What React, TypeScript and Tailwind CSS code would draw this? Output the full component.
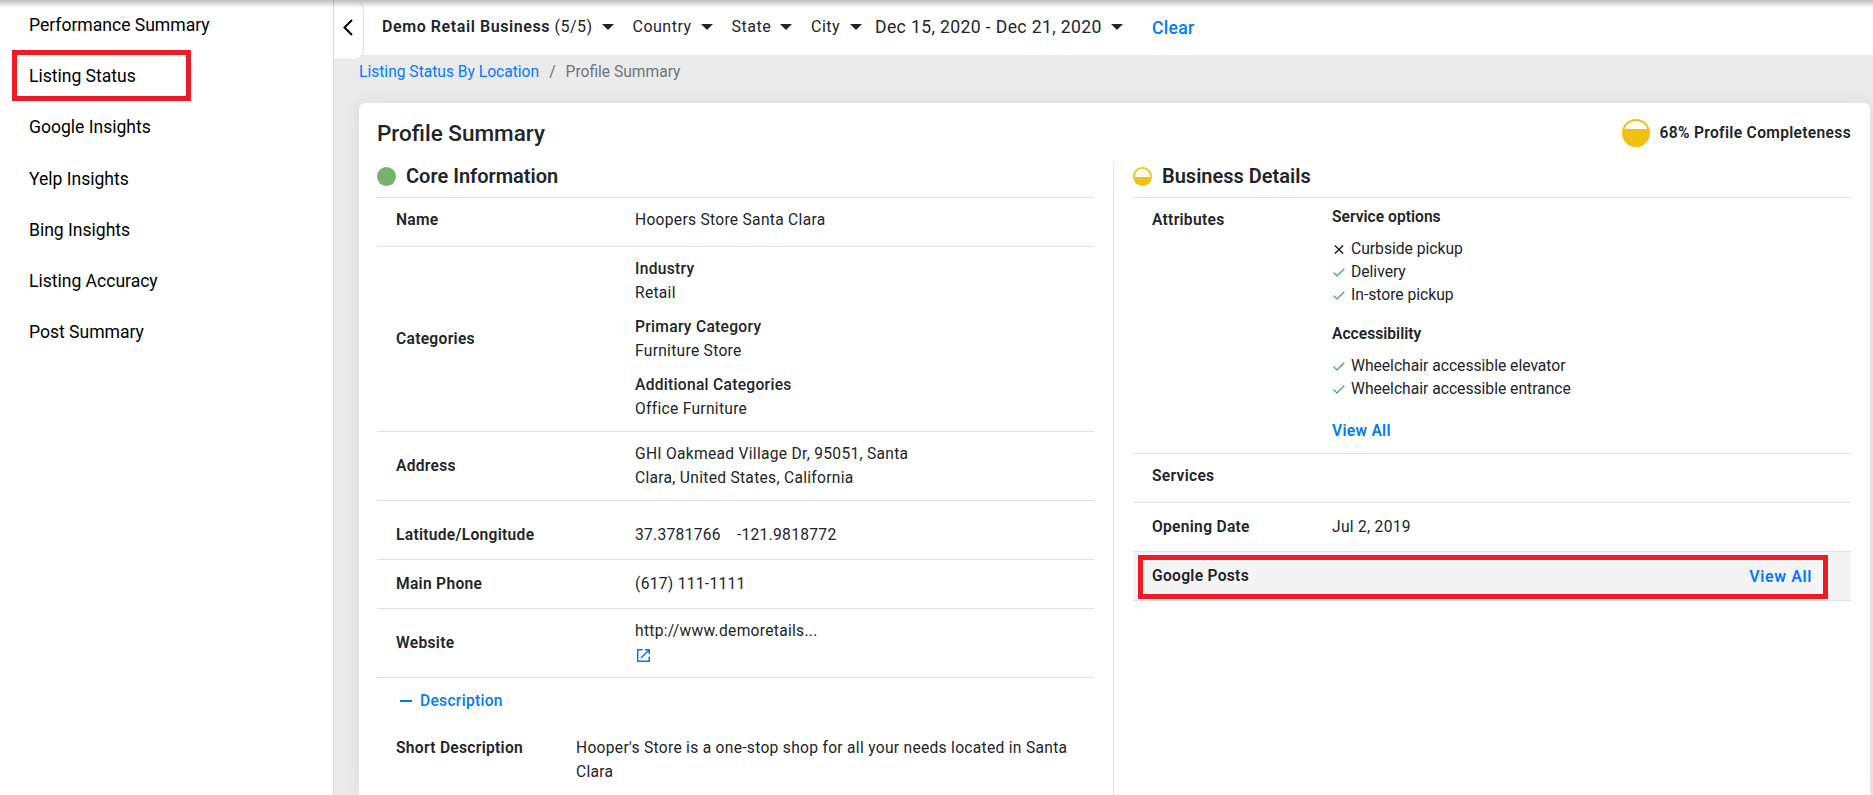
import React from 'react';

const menu = [
  'Performance Summary',
  'Listing Status',
  'Google Insights',
  'Yelp Insights',
  'Bing Insights',
  'Listing Accuracy',
  'Post Summary',
];

const categories = [
  { title: 'Industry', value: 'Retail' },
  { title: 'Primary Category', value: 'Furniture Store' },
  { title: 'Additional Categories', value: 'Office Furniture' },
];

const Caret = () => (
  <svg width="12" height="6" viewBox="0 0 12 6" className="shrink-0">
    <path d="M0 0h12L6 6z" fill="#212529" />
  </svg>
);

const Check = () => (
  <svg width="12" height="9" viewBox="0 0 12 9" className="ml-[1px] mr-[6px] mt-[1px] shrink-0" fill="none">
    <path d="M0.6 4.6L4 8L11.4 0.6" stroke="#28a745" strokeWidth="1.2" />
  </svg>
);

const Cross = () => (
  <svg width="10" height="9" viewBox="0 0 10 9" className="ml-[2px] mr-[7px] mt-[1px] shrink-0" fill="none">
    <path d="M0.8 0.4L9.2 8.6M9.2 0.4L0.8 8.6" stroke="#212529" strokeWidth="1.4" />
  </svg>
);

type RowProps = { label: string; className?: string; children?: React.ReactNode };

const CoreRow = ({ label, className = '', children }: RowProps) => (
  <div className={`flex items-center border-b border-[#dee2e6] pl-[19px] ${className}`}>
    <div className="w-[239px] shrink-0 font-semibold">{label}</div>
    <div className="w-[290px]">{children}</div>
  </div>
);

const Attribute = ({ ok = true, children }: { ok?: boolean; children: React.ReactNode }) => (
  <div className="flex h-[23px] items-center text-[15.7px] leading-[23px] tracking-[-0.02px]">
    {ok ? <Check /> : <Cross />}
    {children}
  </div>
);

export default function App() {
  return (
    <div className="relative flex h-[795px] w-[1873px] overflow-hidden bg-[#ebebeb] font-['Roboto',sans-serif] text-[#212529]">
      {/* Shadow of the navbar above */}
      <div className="absolute inset-x-0 top-0 z-20 h-[8px] bg-linear-to-b from-black/25 to-transparent" />

      {/* Sidebar */}
      <aside className="w-[334px] shrink-0 border-r border-[#dcdcdc] bg-white text-[17.6px] leading-[26px] text-black">
        {menu.map((item) => (
          <div key={item} className="relative flex h-[51px] items-center pb-[1px] pl-[29px] tracking-[-0.03px] nth-3:mb-px">
            {item}
            {item === 'Listing Status' && (
              <div className="absolute left-[12px] top-[-1px] h-[51px] w-[179px] border-5 border-[#ed1c24]" />
            )}
          </div>
        ))}
      </aside>

      <main className="flex min-w-0 flex-1 flex-col">
        {/* Filters */}
        <header className="flex h-[55px] shrink-0 items-start bg-white">
          <button className="flex h-[60px] w-[30px] shrink-0 items-center justify-center rounded-r-[10px] border-r border-b border-[#dee2e6] bg-white pb-[4px] pr-[1px]">
            <svg width="10" height="17" viewBox="0 0 10 17" fill="none">
              <path d="M9 1L1.5 8.5L9 16" stroke="#000" strokeWidth="2" />
            </svg>
          </button>
          <div className="flex h-[54px] items-center pl-[18px] text-[16px] tracking-[0.5px]">
            <div className="flex w-[250px] items-center justify-between pr-[18.5px]">
              <span>
                <strong className="font-semibold tracking-[0.58px]">Demo Retail Business</strong> (5/5)
              </span>
              <Caret />
            </div>
            <div className="flex w-[99px] items-center justify-between pr-[18px] pl-[0.5px]">Country <Caret /></div>
            <div className="flex w-[80px] items-center justify-between pr-[19px] pl-[0.5px]">State <Caret /></div>
            <div className="flex w-[64px] items-center justify-between pr-[13.5px]">City <Caret /></div>
            <div className="flex w-[276px] items-center justify-between pr-[28px] text-[17.6px] tracking-[0.37px]">
              Dec 15, 2020 - Dec 21, 2020 <Caret />
            </div>
            <a href="#" className="pt-[3px] pl-[1px] text-[17.6px] font-medium tracking-[0.3px] text-[#007bff]">Clear</a>
          </div>
        </header>

        {/* Breadcrumb */}
        <nav className="flex h-[48px] shrink-0 items-start gap-[10px] pl-[25px] pt-[5px] text-[15.6px] leading-[24px] text-[#6c757d]">
          <a href="#" className="text-[#007bff]">Listing Status By Location</a>
          <span>/</span>
          <span>Profile Summary</span>
        </nav>

        {/* Profile card */}
        <section className="ml-[25px] mr-[3px] flex flex-1 flex-col rounded-t-[6px] bg-white pl-[18px] pr-[19px] text-[15.6px] leading-[24px] tracking-[0.29px] shadow-[0_0_20px_rgba(0,0,0,0.08)]">
          <div className="flex h-[60px] shrink-0 items-center justify-between">
            <h1 className="text-[22.5px] font-medium tracking-normal">Profile Summary</h1>
            <div className="flex items-center font-semibold">
              <svg width="28" height="28" viewBox="0 0 28 28" className="mr-[9px]">
                <circle cx="14" cy="14" r="13" fill="#fff" stroke="#f1c111" strokeWidth="2" />
                <path d="M2 10h24a13 13 0 1 1-24 0z" fill="#f1c111" />
              </svg>
              <span className="tracking-[0.32px]">68% Profile Completeness</span>
            </div>
          </div>

          <div className="flex flex-1">
            {/* Core information */}
            <div className="w-[737px] shrink-0 border-r border-[#dee2e6] pr-[19px]">
              <div className="flex h-[35px] items-center border-b border-[#dee2e6] pb-[9px]">
                <svg width="19" height="19" viewBox="0 0 19 19" className="mt-[2px] mr-[10px]">
                  <circle cx="9.5" cy="9.5" r="9.5" fill="#76b36c" />
                </svg>
                <h2 className="text-[20px] font-semibold tracking-normal">Core Information</h2>
              </div>

              <CoreRow label="Name" className="h-[49px] pb-[4px]">Hoopers Store Santa Clara</CoreRow>
              <CoreRow label="Categories" className="h-[185px]">
                <div className="space-y-[10px]">
                  {categories.map((c) => (
                    <div key={c.title}>
                      <div className="font-medium">{c.title}</div>
                      <div>{c.value}</div>
                    </div>
                  ))}
                </div>
              </CoreRow>
              <CoreRow label="Address" className="h-[69px]">
                GHI Oakmead Village Dr, 95051, Santa Clara, United States, California
              </CoreRow>
              <CoreRow label="Latitude/Longitude" className="h-[59px] pt-[10px]">
                <span className="mr-[16px]">37.3781766</span>
                <span>-121.9818772</span>
              </CoreRow>
              <CoreRow label="Main Phone" className="h-[49px]">(617) 111-1111</CoreRow>
              <CoreRow label="Website" className="h-[69px]">
                <div>http://www.demoretails...</div>
                <div className="flex h-[24px] items-center pl-[2px]">
                  <svg width="13" height="13" viewBox="0 0 13 13" fill="none" stroke="#007bff" strokeWidth="1.5">
                    <path d="M5.5 0.75H0.75V12.25H12.25V7.5M7.8 0.75H12.25V5.2M12.25 0.75L4 9" />
                  </svg>
                </div>
              </CoreRow>

              <div className="flex h-[45px] items-center pl-[23px] font-medium text-[#007bff]">
                <span className="mr-[8px] h-[2px] w-[12px] bg-[#007bff]" />
                Description
              </div>
              <div className="flex pl-[19px] pt-[13px]">
                <div className="w-[180px] shrink-0 font-semibold">Short Description</div>
                <p className="w-[500px]">Hooper's Store is a one-stop shop for all your needs located in Santa Clara</p>
              </div>
            </div>

            {/* Business details */}
            <div className="ml-[19px] flex-1">
              <div className="flex h-[35px] items-center border-b border-[#dee2e6] pb-[9px]">
                <svg width="19" height="19" viewBox="0 0 19 19" className="mt-[2px] mr-[10px]">
                  <circle cx="9.5" cy="9.5" r="8.6" fill="#fff" stroke="#f1c111" strokeWidth="1.8" />
                  <path d="M1 10h17a8.5 8.5 0 0 1-17 0z" fill="#f1c111" />
                </svg>
                <h2 className="text-[20px] font-semibold tracking-normal">Business Details</h2>
              </div>

              <div className="flex h-[256px] border-b border-[#dee2e6] pl-[19px]">
                <div className="w-[180px] shrink-0 pt-[10px] font-semibold">Attributes</div>
                <div className="pt-[7px]">
                  <h3 className="font-semibold tracking-[0.02px]">Service options</h3>
                  <div className="mt-[8px]">
                    <Attribute ok={false}>Curbside pickup</Attribute>
                    <Attribute>Delivery</Attribute>
                    <Attribute>In-store pickup</Attribute>
                  </div>
                  <h3 className="mt-[16px] font-semibold tracking-[0.02px]">Accessibility</h3>
                  <div className="mt-[8px]">
                    <Attribute>Wheelchair accessible elevator</Attribute>
                    <Attribute>Wheelchair accessible entrance</Attribute>
                  </div>
                  <a href="#" className="mt-[19px] block font-semibold text-[#007bff]">View All</a>
                </div>
              </div>
              <div className="flex h-[49px] items-center border-b border-[#dee2e6] pb-[4px] pl-[19px] font-semibold">Services</div>
              <div className="flex h-[49px] items-center border-b border-[#dee2e6] pl-[19px]">
                <span className="w-[180px] font-semibold">Opening Date</span>
                <span>Jul 2, 2019</span>
              </div>
              <div className="relative flex h-[49px] items-center justify-between border-b border-[#dee2e6] bg-[#f4f4f4] pl-[19px] pr-[39px] font-semibold">
                <span>Google Posts</span>
                <a href="#" className="pt-[2px] text-[16px] tracking-[0.6px] text-[#007bff]">View All</a>
                <div className="absolute left-[5px] top-[3px] h-[44px] w-[690px] border-5 border-[#ed1c24]" />
              </div>
            </div>
          </div>
        </section>
      </main>
    </div>
  );
}
